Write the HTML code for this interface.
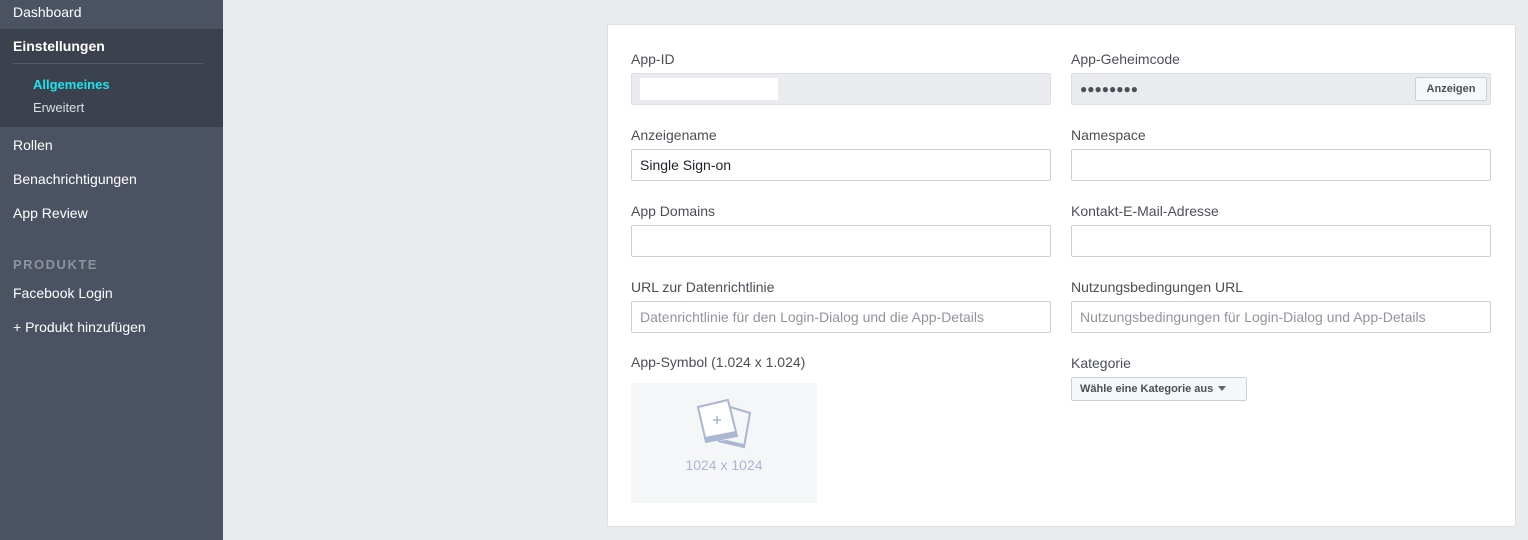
<!DOCTYPE html>
<html><head><style>
*{margin:0;padding:0;box-sizing:border-box}
body{width:1528px;height:540px;background:#e9ebee;font-family:"Liberation Sans",Arial,sans-serif;position:relative;overflow:hidden}
.sb{position:absolute;left:0;top:0;width:223px;height:540px;background:#4b5261}
.sb .it{position:absolute;left:13px;color:#fff;font-size:14px}
.sel{position:absolute;left:0;top:29px;width:223px;height:98px;background:#3c424d}
.card{position:absolute;left:607px;top:24px;width:909px;height:503px;background:#fff;border:1px solid #dddfe2;border-radius:2px}
.l{position:absolute;font-size:14px;color:#4b4f56}
.in{position:absolute;width:420px;height:32px;border:1px solid #ccd0d5;border-radius:2px;background:#fff;font-size:14px;padding:0 8px;line-height:30px;color:#1d2129}
.ph{color:#90949c}
</style></head><body>
<div class="sb">
<div class="sel"></div>
<div class="it" style="top:4px">Dashboard</div>
<div class="it" style="top:38px;font-weight:bold">Einstellungen</div>
<div style="position:absolute;left:13px;top:63px;width:190px;height:1px;background:#555c68"></div>
<div class="it" style="left:33px;top:77px;font-size:13px;font-weight:bold;color:#1ee3ef">Allgemeines</div>
<div class="it" style="left:33px;top:100px;font-size:13px;color:#dddfe2">Erweitert</div>
<div class="it" style="top:137px">Rollen</div>
<div class="it" style="top:171px">Benachrichtigungen</div>
<div class="it" style="top:205px">App Review</div>
<div class="it" style="top:257px;font-size:13px;font-weight:bold;color:#8d939e;letter-spacing:1.5px">PRODUKTE</div>
<div class="it" style="top:285px">Facebook Login</div>
<div class="it" style="top:319px">+ Produkt hinzufügen</div>
</div>
<div class="card"></div>
<div class="l" style="left:631px;top:51px">App-ID</div>
<div class="in" style="left:631px;top:73px;background:#e9ebee;border-color:#dddfe2"><div style="position:absolute;left:8px;top:4px;width:138px;height:22px;background:#fff"></div></div>
<div class="l" style="left:1071px;top:51px">App-Geheimcode</div>
<div class="in" style="left:1071px;top:73px;background:#e9ebee;border-color:#dddfe2;color:#4b4f56;font-size:12px">●●●●●●●●<div style="position:absolute;right:3px;top:3px;width:72px;height:24px;border:1px solid #ccd0d5;background:#f6f7f9;border-radius:2px;font-size:11px;font-weight:bold;text-align:center;line-height:22px">Anzeigen</div></div>
<div class="l" style="left:631px;top:127px">Anzeigename</div>
<div class="in" style="left:631px;top:149px">Single Sign-on</div>
<div class="l" style="left:1071px;top:127px">Namespace</div>
<div class="in" style="left:1071px;top:149px"></div>
<div class="l" style="left:631px;top:203px">App Domains</div>
<div class="in" style="left:631px;top:225px"></div>
<div class="l" style="left:1071px;top:203px">Kontakt-E-Mail-Adresse</div>
<div class="in" style="left:1071px;top:225px"></div>
<div class="l" style="left:631px;top:279px">URL zur Datenrichtlinie</div>
<div class="in ph" style="left:631px;top:301px">Datenrichtlinie für den Login-Dialog und die App-Details</div>
<div class="l" style="left:1071px;top:279px">Nutzungsbedingungen URL</div>
<div class="in ph" style="left:1071px;top:301px">Nutzungsbedingungen für Login-Dialog und App-Details</div>
<div class="l" style="left:631px;top:354px">App-Symbol (1.024 x 1.024)</div>
<div style="position:absolute;left:631px;top:383px;width:186px;height:120px;background:#f5f6f7">
<svg style="position:absolute;left:59px;top:12px" width="70" height="60" viewBox="0 0 70 60">
<path d="M40 12 L60 18 L54 52 L28 46" fill="none" stroke="#a9b7d1" stroke-width="2"/>
<path d="M8 12 L38 5 L47 41 L16 47 Z" fill="#fff" stroke="#a9b7d1" stroke-width="2"/>
<path d="M15 42 L46 36 L47 41 L16 47 Z" fill="#a9b7d1"/>
<path d="M28 46 L54 52 L54 49 L36 45Z" fill="#a9b7d1"/>
<path d="M27 21 v8 M23 25 h8" stroke="#a9b7d1" stroke-width="1.5"/>
</svg>
<div style="position:absolute;left:0;width:186px;top:74px;text-align:center;font-size:14px;color:#a9b7d1">1024 x 1024</div>
</div>
<div class="l" style="left:1071px;top:355px">Kategorie</div>
<div style="position:absolute;left:1071px;top:377px;width:176px;height:24px;border:1px solid #ccd0d5;background:#f6f7f9;border-radius:2px;font-size:11px;font-weight:bold;color:#4b4f56;line-height:22px;padding-left:8px">Wähle eine Kategorie aus <span style="display:inline-block;border:4px solid transparent;border-top:5px solid #606770;vertical-align:-3px;margin-left:2px"></span></div>
</body></html>
